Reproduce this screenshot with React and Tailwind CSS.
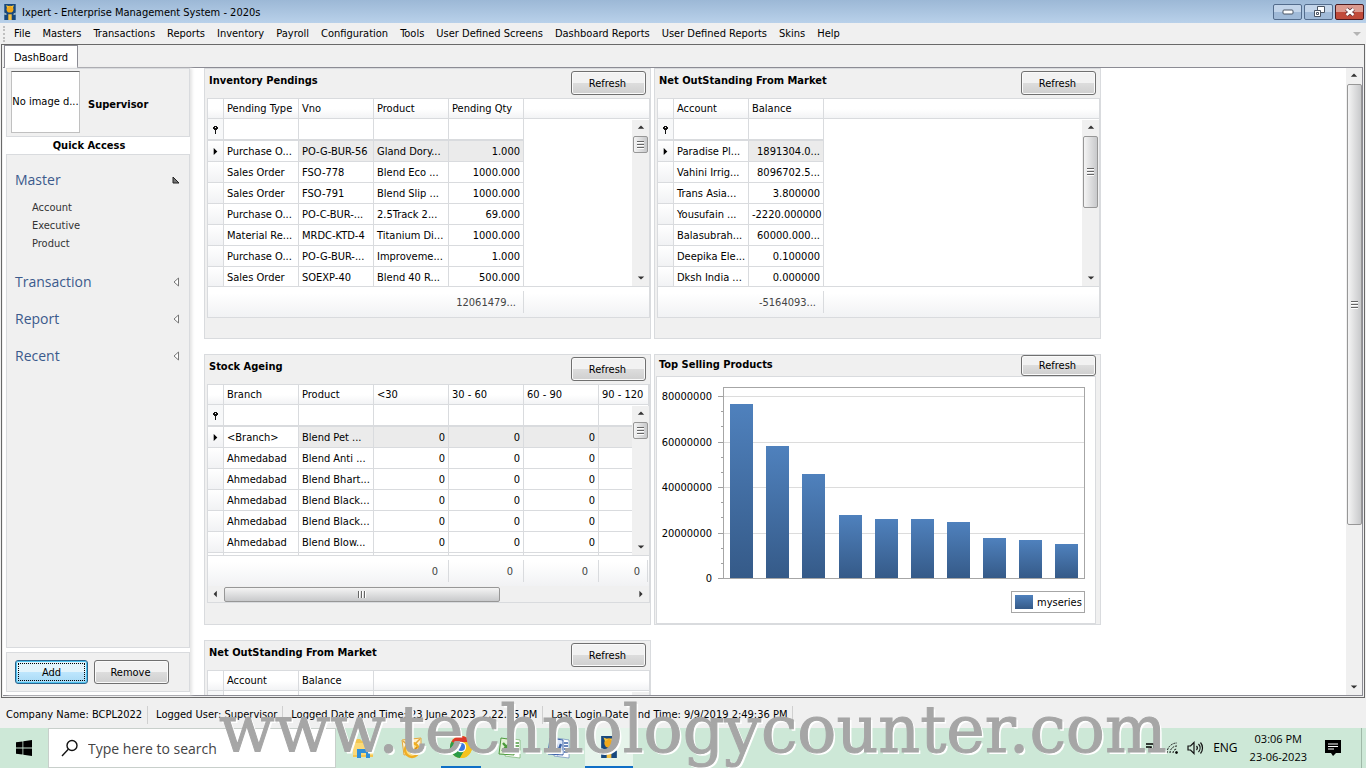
const border = "border-[#d9dbde]";

const menuItems = [
  "File",
  "Masters",
  "Transactions",
  "Reports",
  "Inventory",
  "Payroll",
  "Configuration",
  "Tools",
  "User Defined Screens",
  "Dashboard Reports",
  "User Defined Reports",
  "Skins",
  "Help",
];

const pendings = [
  ["Purchase O...", "PO-G-BUR-56", "Gland Dory...", "1.000"],
  ["Sales Order", "FSO-778", "Blend Eco ...", "1000.000"],
  ["Sales Order", "FSO-791", "Blend Slip ...", "1000.000"],
  ["Purchase O...", "PO-C-BUR-...", "2.5Track 2...", "69.000"],
  ["Material Re...", "MRDC-KTD-4", "Titanium Di...", "1000.000"],
  ["Purchase O...", "PO-G-BUR-...", "Improveme...", "1.000"],
  ["Sales Order", "SOEXP-40", "Blend 40 R...", "500.000"],
];

const outstanding = [
  ["Paradise Pl...", "1891304.0..."],
  ["Vahini Irrig...", "8096702.5..."],
  ["Trans Asia...", "3.800000"],
  ["Yousufain ...", "-2220.000000"],
  ["Balasubrah...", "60000.000..."],
  ["Deepika Ele...", "0.100000"],
  ["Dksh India ...", "0.000000"],
];

const ageing = [
  ["<Branch>", "Blend Pet ...", "0", "0", "0", ""],
  ["Ahmedabad", "Blend Anti ...", "0", "0", "0", ""],
  ["Ahmedabad", "Blend Bhart...", "0", "0", "0", ""],
  ["Ahmedabad", "Blend Black...", "0", "0", "0", ""],
  ["Ahmedabad", "Blend Black...", "0", "0", "0", ""],
  ["Ahmedabad", "Blend Blow...", "0", "0", "0", ""],
  ["", "", "", "", "", ""],
];

const statusItems = [
  "Company Name: BCPL2022",
  "Logged User: Supervisor",
  "Logged Date and Time: 23 June 2023  2.22.15 PM",
  "Last Login Date and Time: 9/9/2019 2:49:36 PM",
];

const AppIcon = ({ className }) => (
  <svg viewBox="0 0 20 28" className={className} aria-hidden="true">
    <rect width="20" height="28" fill="#17487e" />
    <path d="M0 15l4 2v2H0zM20 15l-4 2v2h4z" fill="#b9cfd0" />
    <circle cx="10" cy="9" r="6" fill="#f0a81c" />
    <path d="M3 2l6 2-4 3zM17 2l-6 2 4 3z" fill="#f7c53a" />
    <path d="M7 18h6v10H7z" fill="#f6c244" />
  </svg>
);

const arrows = {
  up: "M1 6 5 2 9 6z",
  down: "M1 3h8L5 7z",
  left: "M6 1v8L2 5z",
  right: "M3 1v8l4-4z",
};

const ScrollArrow = ({ dir }) => (
  <button type="button" aria-label={`Scroll ${dir}`} className="flex h-4 w-4 shrink-0 items-center justify-center">
    <svg viewBox="0 0 10 10" className="h-2 w-2" fill="#333">
      <path d={arrows[dir]} />
    </svg>
  </button>
);

const Grip = ({ vertical }) => (
  <span className={vertical ? "flex gap-px" : "flex flex-col gap-px"}>
    {[0, 1, 2].map((i) => (
      <span
        key={i}
        className={
          vertical
            ? "h-[7px] w-[2px] border-r border-white bg-[#666]"
            : "h-[2px] w-[7px] border-b border-white bg-[#666]"
        }
      />
    ))}
  </span>
);

const VScroll = ({ thumb }) => (
  <div className="absolute right-0 top-[21px] bottom-0 flex w-[17px] flex-col items-center bg-[#f0f0f0]">
    <ScrollArrow dir="up" />
    <div
      className={`flex w-[15px] items-center justify-center rounded-xs border border-[#979797] bg-linear-to-r from-[#f4f4f4] to-[#c8c9cb] ${thumb}`}
    >
      <Grip />
    </div>
    <div className="flex-1" />
    <ScrollArrow dir="down" />
  </div>
);

const Button = ({ children, className }) => (
  <button
    type="button"
    className={`rounded-[3px] border border-[#707070] bg-linear-to-b from-[#f2f2f2] from-50% via-[#dddddd] via-50% to-[#cfcfcf] pt-px pr-[2px] text-center leading-4 shadow-[inset_0_0_0_1px_#fafafa] ${className}`}
  >
    {children}
  </button>
);

const Panel = ({ title, children, compact }) => (
  <section className={`flex h-[271px] w-[447px] flex-col border bg-[#f0f0f0] ${border}`}>
    <header className={`flex items-start justify-between pl-1 pr-1 ${compact ? "h-[21px]" : "h-[29px] pt-[2px]"}`}>
      <h2 className="font-bold leading-5">{title}</h2>
      <Button className={compact ? "h-[21px] w-[75px]" : "h-6 w-[75px]"}>Refresh</Button>
    </header>
    {children}
  </section>
);

const Grid = ({ columns, rows, numeric, totals, thumb, bodyHeight, hscroll }) => (
  <div className={`ml-[2px] border bg-white ${border}`}>
    <div className={`relative overflow-hidden border-b ${border} ${bodyHeight}`}>
      <table className="w-full table-fixed border-separate border-spacing-0">
        <thead>
          <tr className="h-5 bg-linear-to-b from-white from-50% to-[#f1f2f4]">
            <th className={`w-4 border-r border-b ${border}`} aria-label="Row marker" />
            {columns.map((c, i) => (
              <th
                key={c}
                className={`border-r border-b py-0 pl-[3px] text-left font-normal leading-[18px] whitespace-nowrap ${border} ${
                  i < columns.length - 1 || !hscroll ? "w-[75px]" : ""
                }`}
              >
                {c}
              </th>
            ))}
            {!hscroll && <th className={`border-b ${border}`} aria-label="Empty" />}
          </tr>
        </thead>
        <tbody>
          <tr className="h-[22px]">
            <td className={`border-r border-b-2 bg-[#f7f8f9] ${border}`}>
              <svg viewBox="0 0 9 9" className="mx-auto h-[9px] w-[9px]" shapeRendering="crispEdges">
                <path d="M3 1h3v1h1v2H6v1H5v4H4V5H3V4H2V2h1z" fill="#111" />
                <path d="M4 2h1v1H4z" fill="#fff" />
              </svg>
            </td>
            {columns.map((c) => (
              <td key={c} className={`border-r border-b-2 p-0 ${border}`}>
                <input aria-label={`Filter ${c}`} className="block h-[18px] w-full px-1 outline-none" />
              </td>
            ))}
            {!hscroll && <td />}
          </tr>
          {rows.map((row, r) => (
            <tr key={r} className="h-[21px]">
              <td className={`border-r border-b bg-linear-to-b from-white to-[#f1f2f4] p-0 ${border}`}>
                {r === 0 && (
                  <svg viewBox="0 0 10 10" className="mx-auto h-[9px] w-[9px]">
                    <path d="M3 1v8l4-4z" fill="#000" />
                  </svg>
                )}
              </td>
              {row.map((cell, i) => (
                <td
                  key={i}
                  className={`border-r border-b px-[3px] pt-[2px] pb-0 leading-[18px] whitespace-nowrap ${border} ${
                    i >= numeric ? "text-right" : ""
                  } ${r === 0 && i > 0 ? "bg-[#ebebeb]" : ""}`}
                >
                  {cell}
                </td>
              ))}
              {!hscroll && <td />}
            </tr>
          ))}
        </tbody>
      </table>
      <VScroll thumb={thumb} />
    </div>
    <div className="flex h-[30px] bg-linear-to-b from-white from-20% to-[#f1f2f4] pt-1 text-[#444]">
      <div className="w-4" />
      {columns.map((c, i) => (
        <div
          key={c}
          className={`mb-1 pt-[2px] text-right leading-5 ${
            hscroll && i === columns.length - 1 ? "w-[49px]" : "w-[75px]"
          } ${hscroll && i < columns.length - 1 ? "pr-[10px]" : "pr-[7px]"} ${
            totals[i] ? "border-r border-[#d9dbde]" : ""
          }`}
        >
          {totals[i]}
        </div>
      ))}
    </div>
    {hscroll && (
      <div className="flex h-4 items-center bg-[#f0f0f0]">
        <ScrollArrow dir="left" />
        <div className="flex h-[15px] w-[276px] items-center justify-center rounded-xs border border-[#979797] bg-linear-to-b from-[#f4f4f4] to-[#c8c9cb]">
          <Grip vertical />
        </div>
        <div className="flex-1" />
        <ScrollArrow dir="right" />
      </div>
    )}
  </div>
);

const barTops = [27, 69, 97, 138, 142, 142, 145, 161, 163, 167];
const axis = [
  ["80000000", 19],
  ["60000000", 65],
  ["40000000", 110],
  ["20000000", 156],
  ["0", 201],
];
const minorTicks = [34, 49, 80, 95, 125, 140, 171, 186];

const Chart = () => (
  <div className={`mr-1 ml-px flex-1 border bg-white ${border}`}>
    <svg viewBox="0 0 438 246" className="block h-full w-full" role="img" aria-label="Top Selling Products">
      <defs>
        <linearGradient id="bar" x1="0" y1="0" x2="0" y2="1">
          <stop offset="0" stopColor="#4f81bd" />
          <stop offset="1" stopColor="#355a88" />
        </linearGradient>
      </defs>
      <g shapeRendering="crispEdges">
        {axis.map(([label, y]) => (
          <g key={label}>
            <path d={`M66 ${y + 0.5}h362`} stroke="#dcdcdc" />
            <path d={`M61 ${y + 0.5}h5`} stroke="#a0a0a0" />
          </g>
        ))}
        {minorTicks.map((y) => (
          <path key={y} d={`M64 ${y + 0.5}h2`} stroke="#a0a0a0" />
        ))}
        {barTops.map((y, i) => (
          <rect key={i} x={73 + i * 36 + (i > 2 ? 1 : 0)} y={y} width="23" height={201 - y} fill="url(#bar)" />
        ))}
        <rect x="66.5" y="10.5" width="361" height="191" fill="none" stroke="#a6a6a6" />
        <rect x="354.5" y="214.5" width="73" height="21" fill="#fff" stroke="#a6a6a6" />
        <rect x="358" y="218" width="18" height="14" fill="url(#bar)" />
      </g>
      {axis.map(([label, y]) => (
        <text key={label} x="55" y={y + 4} textAnchor="end">
          {label}
        </text>
      ))}
      <text x="380" y="229">
        myseries
      </text>
    </svg>
  </div>
);

const NavGroup = ({ name, items }) => (
  <div>
    <button
      type="button"
      className="flex h-[37px] w-full items-center justify-between pl-2 pr-[9px] font-['Open_Sans',sans-serif] text-sm text-[#3b5a8c]"
    >
      {name}
      {items ? (
        <svg viewBox="0 0 8 8" className="h-2 w-2">
          <path d="M1 1v6h6z" fill="#777" stroke="#222" />
        </svg>
      ) : (
        <svg viewBox="0 0 8 10" className="h-[10px] w-2">
          <path d="M6.500 1v8L2 5z" fill="#fff" stroke="#777" />
        </svg>
      )}
    </button>
    {items && (
      <ul className="pt-px pb-[10px] pl-[25px] text-[#333]">
        {items.map((item) => (
          <li key={item} className="leading-[18px]">
            <a href={`#${item.toLowerCase()}`}>{item}</a>
          </li>
        ))}
      </ul>
    )}
  </div>
);

const Sidebar = () => (
  <aside className="flex w-[184px] shrink-0 flex-col shadow-[2px_0_3px_#e4e4e4]">
    <div className={`flex h-[69px] items-center border bg-[#f0f0f0] pl-1 ${border}`}>
      <div className="mb-[2px] flex h-[62px] w-[69px] items-center justify-center border border-[#c0c0c0] border-t-[#666] bg-white pt-[2px] whitespace-nowrap">
        No image d...
      </div>
      <strong className="ml-2 mt-[6px]">Supervisor</strong>
    </div>
    <h2 className="pr-[18px] pt-px text-center font-bold leading-4">Quick Access</h2>
    <nav className={`flex-1 border bg-[#f0f0f0] pt-[6px] ${border}`}>
      <NavGroup name="Master" items={["Account", "Executive", "Product"]} />
      <NavGroup name="Transaction" />
      <NavGroup name="Report" />
      <NavGroup name="Recent" />
    </nav>
    <div className={`mt-1 mb-[3px] flex h-10 items-center gap-[6px] border bg-[#f0f0f0] pl-2 ${border}`}>
      <button
        type="button"
        className="h-6 w-[73px] rounded-[3px] border border-[#2c628b] bg-linear-to-b from-[#e3f4fc] from-50% via-[#bee6fd] via-50% to-[#a7d9f5] p-[2px] shadow-[inset_0_0_0_1px_#4fc3ee]"
      >
        <span className="block border border-dotted border-black pt-[2px] leading-[14px]">Add</span>
      </button>
      <Button className="h-6 w-[75px]">Remove</Button>
    </div>
  </aside>
);

const TitleBar = () => (
  <header className="flex h-[23px] shrink-0 items-center bg-linear-to-b from-[#9cb8d6] to-[#b9d1ea] pl-1">
    <AppIcon className="h-4 w-3" />
    <h1 className="ml-[6px] flex-1 pt-[3px]">Ixpert - Enterprise Management System - 2020s</h1>
    <div className="flex gap-[2px] pr-[2px]">
      <button
        type="button"
        aria-label="Minimize"
        className="flex h-4 w-[29px] items-center justify-center rounded-xs border border-[#536c8c] bg-linear-to-b from-[#c3d5ea] from-50% to-[#a0bad8] to-50%"
      >
        <svg viewBox="0 0 12 6" className="h-[6px] w-3">
          <rect x="1" y="1" width="10" height="4" rx="1" fill="#fff" stroke="#4a5564" />
        </svg>
      </button>
      <button
        type="button"
        aria-label="Restore"
        className="flex h-4 w-[29px] items-center justify-center rounded-xs border border-[#536c8c] bg-linear-to-b from-[#c3d5ea] from-50% to-[#a0bad8] to-50%"
      >
        <svg viewBox="0 0 12 11" className="h-[11px] w-3" fill="#fff" stroke="#4a5564">
          <path d="M4.500.500h7v6h-7z" />
          <path d="M1.500 4.500h6v6h-6z" />
          <path d="M3.500 6.500h2v2h-2z" />
        </svg>
      </button>
      <button
        type="button"
        aria-label="Close"
        className="flex h-4 w-[29px] items-center justify-center rounded-xs border border-[#4c1a1f] bg-linear-to-b from-[#dc9a8f] from-50% to-[#c04a3a] to-50%"
      >
        <svg viewBox="0 0 12 10" className="h-[10px] w-3">
          <path d="M2.500 2l7 6M9.500 2l-7 6" stroke="#5c3038" strokeWidth="4" />
          <path d="M2.500 2l7 6M9.500 2l-7 6" stroke="#fff" strokeWidth="2.400" />
        </svg>
      </button>
    </div>
  </header>
);

const OutlookIcon = () => (
  <svg viewBox="0 0 24 24" className="h-6 w-6">
    <path d="M2 4l19-2v14L4 19z" fill="#fdf0cb" stroke="#e3a73c" />
    <path d="M3 5l8 7 9-9" fill="none" stroke="#e3a73c" strokeWidth="1.500" />
    <circle cx="12" cy="14" r="7" fill="#fbe08a" stroke="#f0ae22" strokeWidth="2.400" />
    <path d="M7 11c2 5 7 5 10 0" fill="none" stroke="#d98c12" strokeWidth="1.500" />
  </svg>
);

const ExplorerIcon = () => (
  <svg viewBox="0 0 24 24" className="h-6 w-6">
    <path d="M2 3h7l2 2h11v16H2z" fill="#f4c64f" />
    <path d="M2 7h20v12H2z" fill="#fbd978" />
    <path d="M6 13h13v9h-4v-5h-5v5H6z" fill="#2f8fd8" />
  </svg>
);

const ChromeIcon = () => (
  <svg viewBox="0 0 24 24" className="h-6 w-6">
    <circle cx="12" cy="12" r="11" fill="#f6c31c" />
    <path d="M12 12L2.500 6.500A11 11 0 0 1 21.500 6.500z" fill="#dd3a2c" />
    <path d="M12 12L2.500 6.500A11 11 0 0 0 11 23l5-9z" fill="#2a9b46" />
    <path d="M12 7h9.800A11 11 0 0 1 11 23l5.500-9z" fill="#f6c31c" />
    <circle cx="12" cy="12" r="5.200" fill="#fff" />
    <circle cx="12" cy="12" r="4" fill="#3b78e0" />
  </svg>
);

const OfficeIcon = ({ color, letter, light }) => (
  <svg viewBox="0 0 24 24" className="h-6 w-6">
    <path d="M9 2l13 2v18l-15-2z" fill="#fff" stroke={color} strokeOpacity=".5" />
    <path d="M17 7h4M17 10h4M17 13h4M17 16h4" stroke={color} strokeWidth="1.500" />
    <path d="M3 2l13 2v15L1 18z" fill={light} stroke={color} />
    <path d={letter} fill="none" stroke={color} strokeWidth="2.400" />
  </svg>
);

const Taskbar = () => (
  <footer className="flex h-10 shrink-0 items-stretch bg-[#cde8d7]">
    <button type="button" aria-label="Start" className="flex w-12 items-center justify-center">
      <svg viewBox="0 0 16 16" className="h-4 w-4" fill="#000">
        <path d="M0 2.300l6.500-.9v6.200H0zM7.300 1.300L16 0v7.600H7.300zM0 8.400h6.500v6.200L0 13.700zM7.300 8.400H16V16l-8.700-1.300z" />
      </svg>
    </button>
    <label className="flex w-72 items-center border border-[#c8cfcb] bg-white pl-3">
      <svg viewBox="0 0 18 18" className="h-[18px] w-[18px]" fill="none" stroke="#111" strokeWidth="1.400">
        <circle cx="11" cy="6.500" r="5" />
        <path d="M7.300 10.200L1 17" />
      </svg>
      <input
        aria-label="Search"
        placeholder="Type here to search"
        className="ml-[9px] w-56 pt-px font-['Open_Sans',sans-serif] text-sm outline-none placeholder:text-[#444]"
      />
    </label>
    <div className="flex">
      <button type="button" aria-label="File Explorer" className="flex w-[49px] items-center justify-center pl-1">
        <ExplorerIcon />
      </button>
      <button type="button" aria-label="Outlook" className="flex w-[49px] items-center justify-center pl-1">
        <OutlookIcon />
      </button>
      <button type="button" aria-label="Chrome" className="flex w-[49px] flex-col items-center pl-[5px]">
        <span className="flex flex-1 items-center">
          <ChromeIcon />
        </span>
        <span className="h-[2px] w-10 bg-[#0f6fc6]" />
      </button>
      <button type="button" aria-label="Excel" className="flex w-[49px] items-center justify-center pl-1">
        <OfficeIcon color="#4c9a3c" light="#e2f1d6" letter="M5 7l7 8M12 7l-8 8" />
      </button>
      <button type="button" aria-label="Word" className="flex w-[49px] items-center justify-center pl-1">
        <OfficeIcon color="#3a62a8" light="#dbe6f7" letter="M4 7l2 8 3-7 2 8 3-8" />
      </button>
      <button type="button" aria-label="Ixpert" className="ml-1 flex w-12 flex-col items-center bg-[#e6f4eb]">
        <span className="flex flex-1 items-center">
          <AppIcon className="h-[22px] w-4" />
        </span>
        <span className="h-[2px] w-full bg-[#0f6fc6]" />
      </button>
    </div>
    <div className="flex flex-1 items-center justify-end font-['Open_Sans',sans-serif] text-[11px]">
      <svg viewBox="0 0 10 10" className="mr-[11px] h-[10px] w-[10px]" fill="none" stroke="#000" strokeWidth="1.600">
        <path d="M1 1h8v6M1 4h5v5" />
      </svg>
      <svg viewBox="0 0 12 12" className="mr-[9px] h-3 w-3" fill="none" stroke="#111">
        <path d="M1 11A10 10 0 0 1 11 1M4 11A7 7 0 0 1 11 4M7 11A4 4 0 0 1 11 7" strokeDasharray="2 1" />
        <circle cx="10.500" cy="10.500" r="1" fill="#000" />
      </svg>
      <svg viewBox="0 0 17 14" className="mr-[9px] h-[14px] w-[17px]" fill="none" stroke="#111" strokeWidth="1.200">
        <path d="M1 5h2.500L7 1.500v11L3.500 9H1zM9.500 5a3 3 0 0 1 0 4M11.500 3a6 6 0 0 1 0 8M13.500 1.500a8.500 8.500 0 0 1 0 11" />
      </svg>
      <span className="text-xs">ENG</span>
      <time className="ml-3 pb-px text-center leading-[18px]">
        03:06 PM
        <br />
        23-06-2023
      </time>
      <svg viewBox="0 0 16 16" className="ml-[18px] h-4 w-4">
        <path d="M0 0h16v13h-5l-3 3-2-3H0z" fill="#000" />
        <path d="M3 4h10M3 6.500h10M3 9h6" stroke="#fff" />
      </svg>
      <span className="ml-5 h-full border-l border-[#9fb8a8] pr-1" />
    </div>
  </footer>
);

export default function App() {
  return (
    <div className="relative flex h-screen flex-col overflow-hidden bg-[#f0f0f0] font-['DejaVu_Sans_Condensed','DejaVu_Sans',sans-serif] text-[11px] text-black">
      <TitleBar />
      <nav className="flex h-[21px] shrink-0 items-center pl-[3px]">
        <span className="h-4 border-l-2 border-dotted border-[#c0c0c0]" />
        <ul className="ml-[9px] flex flex-1 gap-3 pt-px">
          {menuItems.map((item) => (
            <li key={item}>
              <button type="button" className="whitespace-nowrap">
                {item}
              </button>
            </li>
          ))}
        </ul>
        <svg viewBox="0 0 8 4" className="mr-[5px] h-1 w-2" fill="#b4b4b4">
          <path d="M0 0h8L4 4z" />
        </svg>
      </nav>

      <div className="mx-px flex min-h-0 flex-1 flex-col border border-[#696969] pb-px pr-px pl-px">
        <div className="flex h-[23px] shrink-0 items-end border-b border-[#8c8c94]">
          <button
            type="button"
            className="mb-[-1px] ml-px h-[23px] w-[74px] border border-b-0 border-[#8c8c94] bg-white pt-[2px]"
          >
            DashBoard
          </button>
        </div>
        <main className="flex min-h-0 flex-1 border-r border-b border-[#8c8c94] bg-white pl-[3px]">
          <Sidebar />
          <div className="ml-[14px] grid flex-1 auto-rows-[271px] grid-cols-[447px_447px] gap-x-[3px] gap-y-[15px] overflow-hidden">
            <Panel title="Inventory Pendings">
              <Grid
                columns={["Pending Type", "Vno", "Product", "Pending Qty"]}
                rows={pendings}
                numeric={3}
                totals={["", "", "", "12061479..."]}
                thumb="h-[17px]"
                bodyHeight="h-[188px]"
              />
            </Panel>
            <Panel title="Net OutStanding From Market">
              <Grid
                columns={["Account", "Balance"]}
                rows={outstanding}
                numeric={1}
                totals={["", "-5164093..."]}
                thumb="h-[72px]"
                bodyHeight="h-[188px]"
              />
            </Panel>
            <Panel title="Stock Ageing">
              <Grid
                columns={["Branch", "Product", "<30", "30 - 60", "60 - 90", "90 - 120"]}
                rows={ageing}
                numeric={2}
                totals={["", "", "0", "0", "0", "0"]}
                thumb="h-[17px]"
                bodyHeight="h-[171px]"
                hscroll
              />
            </Panel>
            <Panel title="Top Selling Products" compact>
              <Chart />
            </Panel>
            <Panel title="Net OutStanding From Market">
              <Grid
                columns={["Account", "Balance"]}
                rows={[]}
                numeric={1}
                totals={["", ""]}
                thumb="h-[72px]"
                bodyHeight="h-[188px]"
              />
            </Panel>
          </div>
          <div className="flex w-4 shrink-0 flex-col items-center bg-[#f0f0f0]">
            <ScrollArrow dir="up" />
            <div className="flex h-[441px] w-[15px] items-center justify-center rounded-xs border border-[#979797] bg-linear-to-r from-[#f4f4f4] to-[#c8c9cb]">
              <Grip />
            </div>
            <div className="flex-1" />
            <ScrollArrow dir="down" />
          </div>
        </main>
      </div>

      <ul className="flex h-[30px] shrink-0 items-center pt-[3px] pl-[6px]">
        {statusItems.map((item) => (
          <li key={item} className="mr-2 border-r border-[#d0d0d0] pr-[5px] leading-[18px] whitespace-pre">
            {item}
          </li>
        ))}
      </ul>
      <Taskbar />

      <p className="pointer-events-none absolute bottom-[5px] left-[219px] font-['DejaVu_Serif',serif] text-[65px] leading-[66px] text-[#a6a6a6] [-webkit-text-stroke:1px_#a6a6a6] [text-shadow:2px_2px_0_#fff]">
        www.technologycounter.com
      </p>
    </div>
  );
}
